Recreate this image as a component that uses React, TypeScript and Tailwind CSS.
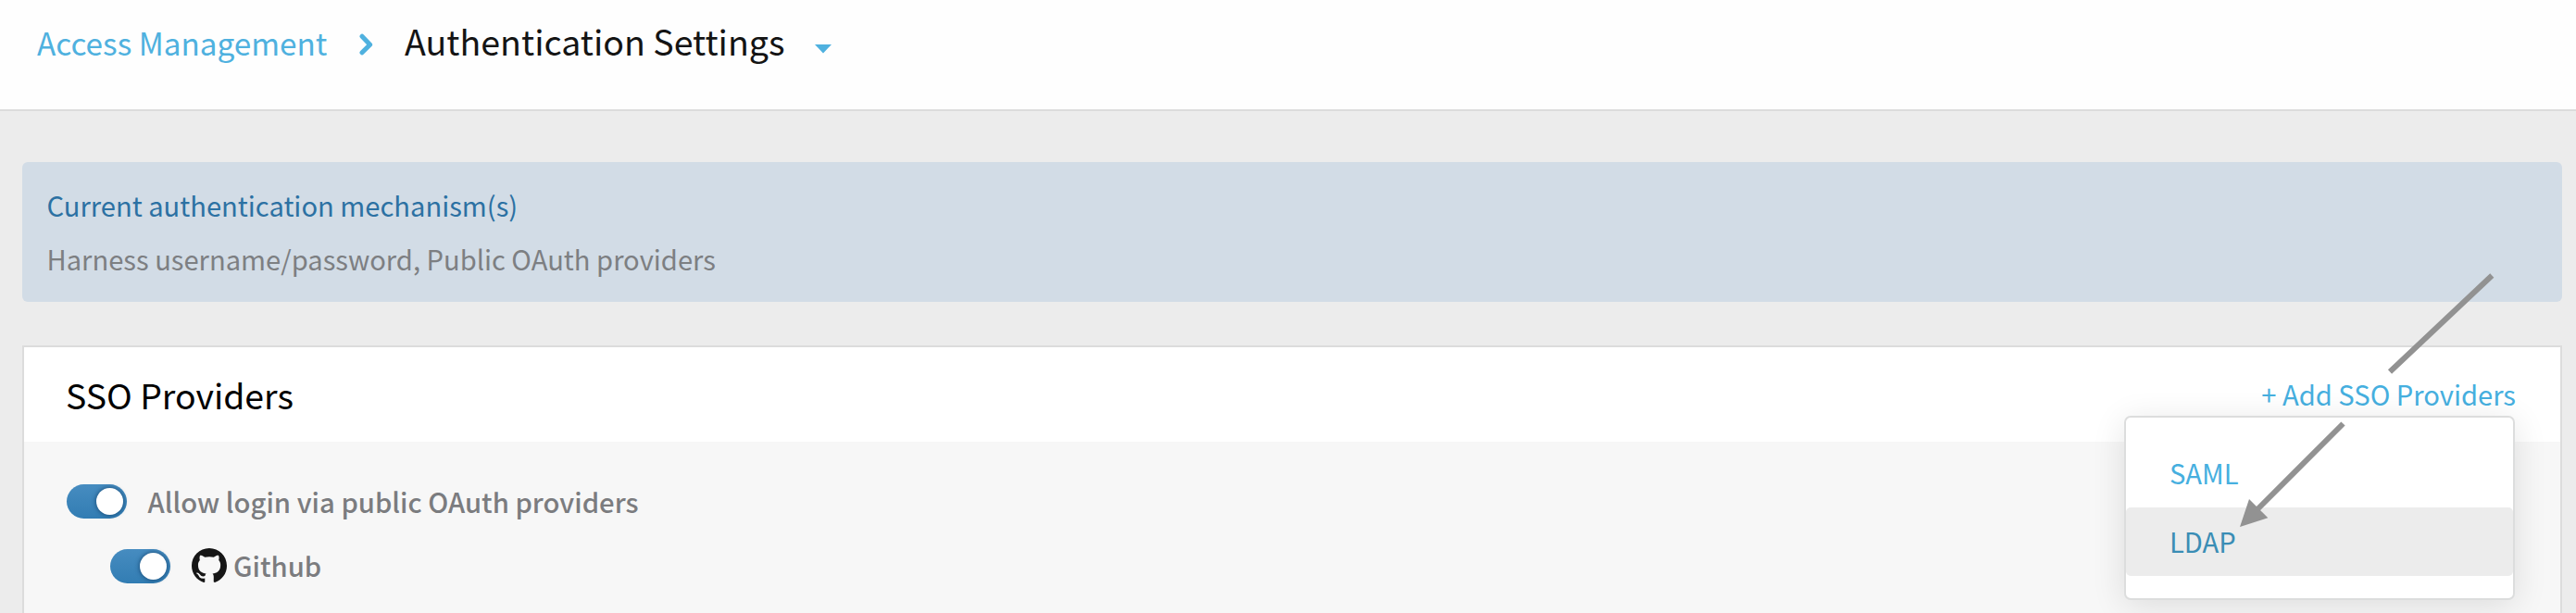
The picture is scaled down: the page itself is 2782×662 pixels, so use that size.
import { ReactNode } from "react";

function Toggle() {
  return (
    <span className="flex h-[37px] w-[65px] shrink-0 items-center justify-end rounded-full bg-linear-to-b from-[#468cc0] to-[#327db3] pr-[4px]">
      <span className="size-[29px] rounded-full bg-white shadow-[0_0_4px_1px_rgba(10,50,90,0.55)]" />
    </span>
  );
}

function MenuItem({ children, active = false }: { children: ReactNode; active?: boolean }) {
  return (
    <li
      className={
        active
          ? "h-[74px] rounded-[5px] bg-[#ececec] pl-[47px] leading-[72px] text-[#3a8db5]"
          : "h-[74px] rounded-[5px] pl-[47px] leading-[72px] text-[#46afdf]"
      }
    >
      {children}
    </li>
  );
}

function GithubMark() {
  return (
    <svg viewBox="0 0 16 16" className="ml-[23px] size-[38px] shrink-0" fill="#161616">
      <path d="M8 0C3.58 0 0 3.58 0 8c0 3.54 2.29 6.53 5.47 7.59.4.07.55-.17.55-.38 0-.19-.01-.82-.01-1.49-2.01.37-2.53-.49-2.69-.94-.09-.23-.48-.94-.82-1.13-.28-.15-.68-.52-.01-.53.63-.01 1.08.58 1.23.82.72 1.21 1.87.87 2.33.66.07-.52.28-.87.51-1.07-1.78-.2-3.64-.89-3.64-3.95 0-.87.31-1.59.82-2.15-.08-.2-.36-1.02.08-2.12 0 0 .67-.21 2.2.82.64-.18 1.32-.27 2-.27s1.36.09 2 .27c1.53-1.04 2.2-.82 2.2-.82.44 1.1.16 1.92.08 2.12.51.56.82 1.27.82 2.15 0 3.07-1.87 3.75-3.65 3.95.29.25.54.73.54 1.48 0 1.07-.01 1.93-.01 2.2 0 .21.15.46.55.38A8.01 8.01 0 0 0 16 8c0-4.42-3.58-8-8-8z" />
    </svg>
  );
}

export default function App() {
  return (
    <div className="relative flex h-[662px] w-full flex-col overflow-hidden whitespace-nowrap bg-[#ececec] font-['Noto_Sans_CJK_SC','Noto_Sans',sans-serif] text-[29.15px]">
      <header className="flex h-[120px] shrink-0 items-start border-b-2 border-[#dcdcdc] bg-[#fefefe] pl-[40px]">
        <a className="w-[348px] text-[33.3px] leading-[91px] text-[#4fb1df]">Access Management</a>
        <svg viewBox="0 0 15 24" className="mt-[36px] h-[24px] w-[15px]" fill="none">
          <path d="M3 3.2 11.6 12.2 3 20.8" stroke="#4fb1df" strokeWidth="5" strokeLinecap="round" strokeLinejoin="round" />
        </svg>
        <h1 className="ml-[34px] w-[443px] text-[37.55px] leading-[87px] text-[#141414]">Authentication Settings</h1>
        <svg viewBox="0 0 18 10" className="mt-[48px] h-[10px] w-[18px]">
          <path d="M0 0H18L9 9.5Z" fill="#4fb1df" />
        </svg>
      </header>

      <main className="flex grow flex-col pl-[24px] pr-[15px] pt-[55px]">
        <section className="flex h-[151px] shrink-0 flex-col rounded-[6px] bg-[#d2dce6] pl-[26.5px] pt-[17px] leading-[58px]">
          <p className="text-[#2c71a3]">Current authentication mechanism(s)</p>
          <p className="text-[#7d7f82]">Harness username/password, Public OAuth providers</p>
        </section>

        <section className="mt-[47px] flex grow flex-col border-2 border-b-0 border-[#dcdcdc] bg-[#f7f7f7]">
          <div className="flex h-[102px] shrink-0 items-start justify-between bg-white pl-[45px] pr-[48px]">
            <h2 className="text-[37.4px] leading-[102px] text-black">SSO Providers</h2>
            <div className="relative text-[#46afdf]">
              <button className="block leading-[100px]">+ Add SSO Providers</button>
              <ul className="absolute right-[1px] top-[74px] h-[199px] w-[422px] rounded-[7px] border-2 border-[#dcdddd] bg-white pt-[23px] shadow-[0_6px_36px_rgba(0,0,0,0.11)]">
                <MenuItem>SAML</MenuItem>
                <MenuItem active>LDAP</MenuItem>
              </ul>
            </div>
          </div>
          <div className="flex flex-col pl-[46px] pt-[46px] text-[29.25px] font-medium text-[#7b7c7f]">
            <div className="flex h-[37px] items-center">
              <Toggle />
              <span className="mb-[2px] ml-[22.5px] leading-[34px]">Allow login via public OAuth providers</span>
            </div>
            <div className="ml-[47px] mt-[32px] flex h-[38px] items-center">
              <Toggle />
              <GithubMark />
              <span className="mb-[2px] ml-[7px] leading-[34px]">Github</span>
            </div>
          </div>
        </section>
      </main>

      <svg className="pointer-events-none absolute left-[2400px] top-[280px]" width="310" height="310" viewBox="2400 280 310 310">
        <path d="M2691.3 297.5 2581 401.5M2530.5 457.5 2437 551" stroke="#929292" strokeWidth="6" fill="none" />
        <path d="M2419 569 2429 539 2449.3 559.3Z" fill="#929292" />
      </svg>
    </div>
  );
}
